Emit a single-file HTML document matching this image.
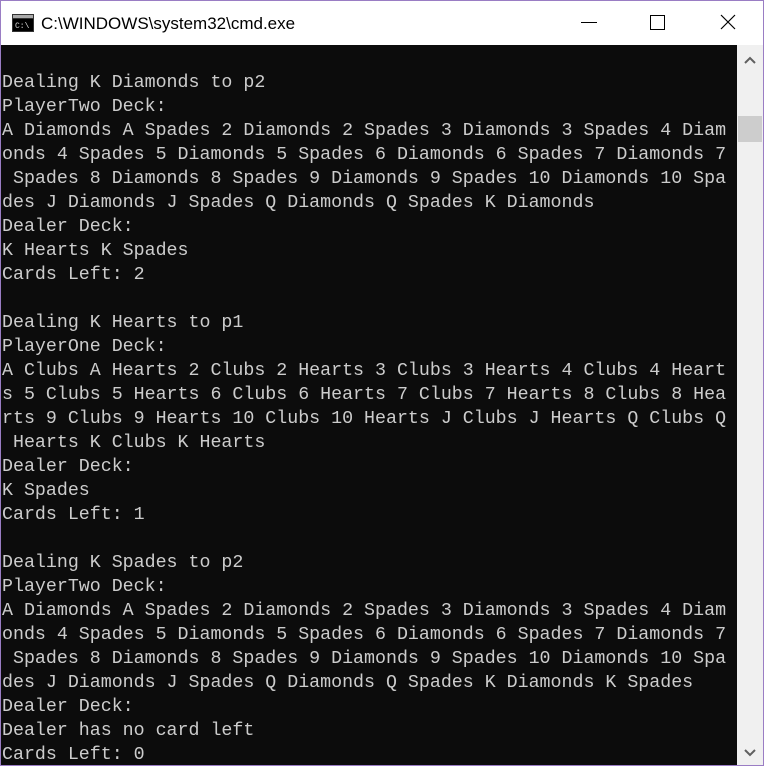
<!DOCTYPE html><html><head><style>
body{margin:0;width:764px;height:766px;overflow:hidden;background:#fff;position:relative}
.frame{position:absolute;left:0;top:0;width:762px;height:764px;border:1px solid #9a7dc4}
.title{position:absolute;left:41px;top:14px;font:17px "Liberation Sans",sans-serif;color:#000}
.con{position:absolute;left:1px;top:45px;width:736px;height:720px;background:#0c0c0c;overflow:hidden}
pre{margin:0;position:absolute;left:1px;top:26px;font:18.3px/24px "Liberation Mono",monospace;color:#cccccc}
.sb{position:absolute;left:737px;top:45px;width:26px;height:720px;background:#f0f0f0}
.th{position:absolute;left:1px;top:71px;width:24px;height:26px;background:#cdcdcd}
</style></head><body>
<div class="frame"></div>
<svg style="position:absolute;left:12px;top:14px" width="22" height="18"><rect x="0" y="0" width="22" height="18" fill="#333"/><rect x="1" y="1" width="20" height="3" fill="#aaa"/><rect x="1" y="5" width="20" height="12" fill="#000"/><text x="3" y="14" font-size="8" fill="#ddd" font-family="Liberation Mono">C:\</text></svg>
<div class="title">C:\WINDOWS\system32\cmd.exe</div>
<div style="position:absolute;left:581px;top:22px;width:16px;height:1px;background:#000"></div>
<div style="position:absolute;left:650px;top:15px;width:13px;height:13px;border:1px solid #000"></div>
<svg style="position:absolute;left:720px;top:14px" width="16" height="16"><path d="M1 1L15 15M15 1L1 15" stroke="#000" stroke-width="1.2"/></svg>
<div class="con"><pre>Dealing K Diamonds to p2
PlayerTwo Deck:
A Diamonds A Spades 2 Diamonds 2 Spades 3 Diamonds 3 Spades 4 Diam
onds 4 Spades 5 Diamonds 5 Spades 6 Diamonds 6 Spades 7 Diamonds 7
 Spades 8 Diamonds 8 Spades 9 Diamonds 9 Spades 10 Diamonds 10 Spa
des J Diamonds J Spades Q Diamonds Q Spades K Diamonds
Dealer Deck:
K Hearts K Spades
Cards Left: 2

Dealing K Hearts to p1
PlayerOne Deck:
A Clubs A Hearts 2 Clubs 2 Hearts 3 Clubs 3 Hearts 4 Clubs 4 Heart
s 5 Clubs 5 Hearts 6 Clubs 6 Hearts 7 Clubs 7 Hearts 8 Clubs 8 Hea
rts 9 Clubs 9 Hearts 10 Clubs 10 Hearts J Clubs J Hearts Q Clubs Q
 Hearts K Clubs K Hearts
Dealer Deck:
K Spades
Cards Left: 1

Dealing K Spades to p2
PlayerTwo Deck:
A Diamonds A Spades 2 Diamonds 2 Spades 3 Diamonds 3 Spades 4 Diam
onds 4 Spades 5 Diamonds 5 Spades 6 Diamonds 6 Spades 7 Diamonds 7
 Spades 8 Diamonds 8 Spades 9 Diamonds 9 Spades 10 Diamonds 10 Spa
des J Diamonds J Spades Q Diamonds Q Spades K Diamonds K Spades
Dealer Deck:
Dealer has no card left
Cards Left: 0</pre></div>
<div class="sb"><div class="th"></div>
<svg style="position:absolute;left:7px;top:11px" width="12" height="8"><path d="M1 7L6 2L11 7" stroke="#606060" stroke-width="2" fill="none"/></svg>
<svg style="position:absolute;left:7px;top:704px" width="12" height="8"><path d="M1 1L6 6L11 1" stroke="#606060" stroke-width="2" fill="none"/></svg>
</div>
</body></html>
